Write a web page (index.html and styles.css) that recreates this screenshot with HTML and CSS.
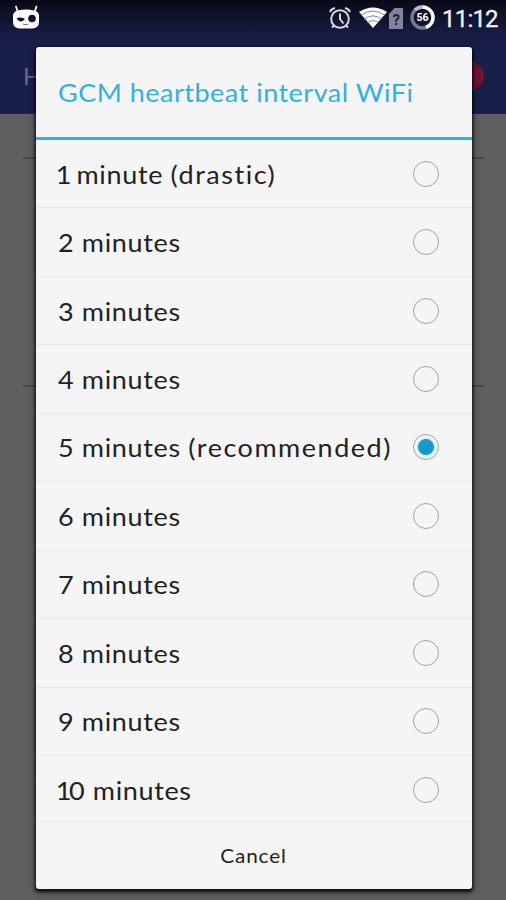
FILE: index.html
```
<!DOCTYPE html>
<html lang="en">
<head>
    <meta charset="UTF-8">
    <meta name="viewport" content="width=device-width, initial-scale=1.0">
    <title>GCM heartbeat interval WiFi</title>
    <link rel="stylesheet" href="styles.css">
</head>
<body>
    <header class="app-header">
        <div class="status-bar">
            <svg class="icon-cyanogen" width="28" height="26" viewBox="0 0 28 26">
                <path d="M4 2.500l2 6M24.500 2.500l-2 6" stroke="#fff" stroke-width="1.800" stroke-linecap="round"/>
                <path d="M6 6.500Q14 4.500 22 6.500Q27 7.500 27 12V18Q27 24 20 24.500H8Q1 24 1 18V12Q1 7.500 6 6.500Z" fill="#fff"/>
                <path d="M4.500 14Q8.500 13 12.500 14.500V15.500Q10.500 18 8 17.500Q5.500 17 4.500 14Z" fill="#11152e"/>
                <circle cx="20" cy="14.500" r="3.800" fill="#11152e"/>
                <path d="M11 20q2.500 1.200 5 0" fill="none" stroke="#777" stroke-width="1.200"/>
            </svg>
            <div class="status-icons">
                <svg class="icon-alarm" width="24" height="24" viewBox="0 0 24 24" fill="none" stroke="#d8d9df" stroke-width="2">
                    <circle cx="12" cy="13" r="8.800"/>
                    <path d="M12 7.500V13l3.500 4.500M2 6q1-3 5-4M22 6q-1-3-5-4M6 19.500l-2 2M18 19.500l2 2"/>
                </svg>
                <svg class="icon-wifi" width="28" height="22" viewBox="0 0 28 22">
                    <path d="M0 5Q14-4 28 5L14 21Z" fill="#fff"/>
                    <path d="M2 8.200Q14 0 26 8.200M5 12.200Q14 5.500 23 12.200M8.500 15.700Q14 11.500 19.500 15.700" fill="none" stroke="#8085a0" stroke-width="1"/>
                </svg>
                <svg class="icon-sim" width="14" height="21" viewBox="0 0 14 21">
                    <path d="M5.500 0H14V21H0V6Z" fill="#81849b"/>
                    <text x="7.300" y="16.500" text-anchor="middle" class="sim-text">?</text>
                </svg>
                <svg class="icon-battery" width="25" height="25" viewBox="0 0 25 25">
                    <circle cx="12.500" cy="12.500" r="10.500" fill="none" stroke="#777b91" stroke-width="3.400"/>
                    <path d="M12.500 2A10.500 10.500 0 0 1 16 22.400" fill="none" stroke="#fff" stroke-width="3.400"/>
                    <path d="M12.500 2A10.500 10.500 0 0 0 5 5" fill="none" stroke="#b9bbc8" stroke-width="3.400"/>
                    <text x="12.500" y="16.300" text-anchor="middle" class="battery-text">56</text>
                </svg>
                <span class="clock">11:12</span>
            </div>
        </div>
        <div class="action-bar">
            <span class="app-title">H</span>
            <span class="record-dot"></span>
        </div>
    </header>

    <main class="settings">
        <div class="section"></div>
        <div class="section"></div>
    </main>

    <div class="dialog">
        <h1 class="dialog-title"><span>GCM heartbeat interval WiFi</span></h1>
        <ul class="options">
            <li class="option"><span class="label"><span class="one">1</span> minute <span class="note">(drastic)</span></span><span class="radio"></span></li>
            <li class="option"><span class="label">2 minutes</span><span class="radio"></span></li>
            <li class="option"><span class="label">3 minutes</span><span class="radio"></span></li>
            <li class="option"><span class="label">4 minutes</span><span class="radio"></span></li>
            <li class="option"><span class="label">5 minutes <span class="note">(recommended)</span></span><span class="radio checked"></span></li>
            <li class="option"><span class="label">6 minutes</span><span class="radio"></span></li>
            <li class="option"><span class="label">7 minutes</span><span class="radio"></span></li>
            <li class="option"><span class="label">8 minutes</span><span class="radio"></span></li>
            <li class="option"><span class="label">9 minutes</span><span class="radio"></span></li>
            <li class="option"><span class="label"><span class="one">1</span>0 minutes</span><span class="radio"></span></li>
        </ul>
        <button class="cancel"><span>Cancel</span></button>
    </div>
</body>
</html>
```
FILE: styles.css
```
* {
    box-sizing: border-box;
}

body {
    margin: 0;
    height: 900px;
    overflow: hidden;
    position: relative;
    font-family: Lato, "Liberation Sans", sans-serif;
    background-color: #5f5f5f;
}

.app-header {
    height: 114px;
    background: linear-gradient(#080a17 0, #161b40 32px, #181f4b 50px);
    border-bottom: 1px solid #23283f;
}

.status-bar {
    display: flex;
    justify-content: space-between;
    height: 37px;
    padding: 4px 8px 0 12px;
}

.status-icons {
    display: flex;
    align-items: flex-start;
}

.icon-alarm {
    margin-top: 2px;
}

.icon-wifi {
    margin: 3px 2px 0 7px;
}

.icon-sim {
    margin-top: 4px;
}

.icon-battery {
    margin: 1px 0 0 7px;
}

.sim-text {
    font: bold 15px Roboto, sans-serif;
    fill: #1a1e38;
}

.battery-text {
    font: bold 10.5px Roboto, sans-serif;
    fill: #fff;
}

.clock {
    width: 56px;
    margin-left: 7px;
    font-family: Roboto, sans-serif;
    font-size: 24px;
    font-weight: 400;
    line-height: 30px;
    letter-spacing: -0.8px;
    white-space: nowrap;
    color: #f2f2f5;
    -webkit-text-stroke: 0.3px #f2f2f5;
}

.action-bar {
    display: flex;
    align-items: center;
    justify-content: space-between;
    height: 77px;
    padding: 0 22px 0 23px;
}

.app-title {
    font-size: 24px;
    color: #686a73;
}

.record-dot {
    width: 28px;
    height: 28px;
    border-radius: 50%;
    background-color: #701334;
}

.settings {
    padding: 43px 22px 0 23px;
}

.section {
    height: 228px;
    border-top: 2px solid #484848;
}

.section + .section {
    border-bottom: 1px solid #5a5a5a;
    height: 392px;
}

.dialog {
    position: absolute;
    top: 47px;
    left: 36px;
    width: 435.5px;
    height: 842px;
    display: flex;
    flex-direction: column;
    overflow: hidden;
    border-radius: 3px;
    background-color: #f5f5f5;
    box-shadow: 0 2px 3px 1px rgba(0, 0, 0, 0.75), 0 2px 7px 1px rgba(0, 0, 0, 0.4);
}

.dialog-title {
    flex: none;
    height: 93px;
    margin: 0;
    padding-left: 22px;
    border-bottom: 3px solid #2fb2e4;
    font-size: 25px;
    font-weight: 400;
    line-height: 91px;
    color: #33b0e0;
}

.dialog-title span {
    display: inline-block;
    transform: scaleX(1.08);
    transform-origin: left;
    letter-spacing: 0.46px;
    white-space: nowrap;
}

.options {
    flex: 1;
    min-height: 0;
    overflow: hidden;
    margin: 0;
    padding: 0;
    list-style: none;
}

.option {
    display: flex;
    align-items: center;
    justify-content: space-between;
    height: 68.45px;
    padding: 0 32.5px 0 22px;
    border-bottom: 1.5px solid #e5e5e5;
}

.label {
    font-size: 25px;
    color: #222;
    letter-spacing: 0.6px;
    white-space: nowrap;
    transform: scaleX(1.08);
    transform-origin: left;
}

/* narrow figure one */
.one {
    margin-left: -2px;
    letter-spacing: -2.4px;
}

.note {
    letter-spacing: 1.4px;
}

.radio {
    flex: none;
    width: 26px;
    height: 26px;
    border: 1.5px solid #a3a3a3;
    border-radius: 50%;
}

.radio.checked {
    background: radial-gradient(circle, #169bc9 7.5px, #d8f0f8 8.5px, #f1f7f9 11px);
}

.cancel {
    flex: none;
    height: 68px;
    padding: 0;
    border: none;
    border-top: 1.5px solid #e8e8e8;
    background: none;
    font-family: inherit;
    font-size: 19px;
    color: #222;
}

.cancel span {
    display: inline-block;
    letter-spacing: 0.8px;
    transform: scaleX(1.09);
}
```
